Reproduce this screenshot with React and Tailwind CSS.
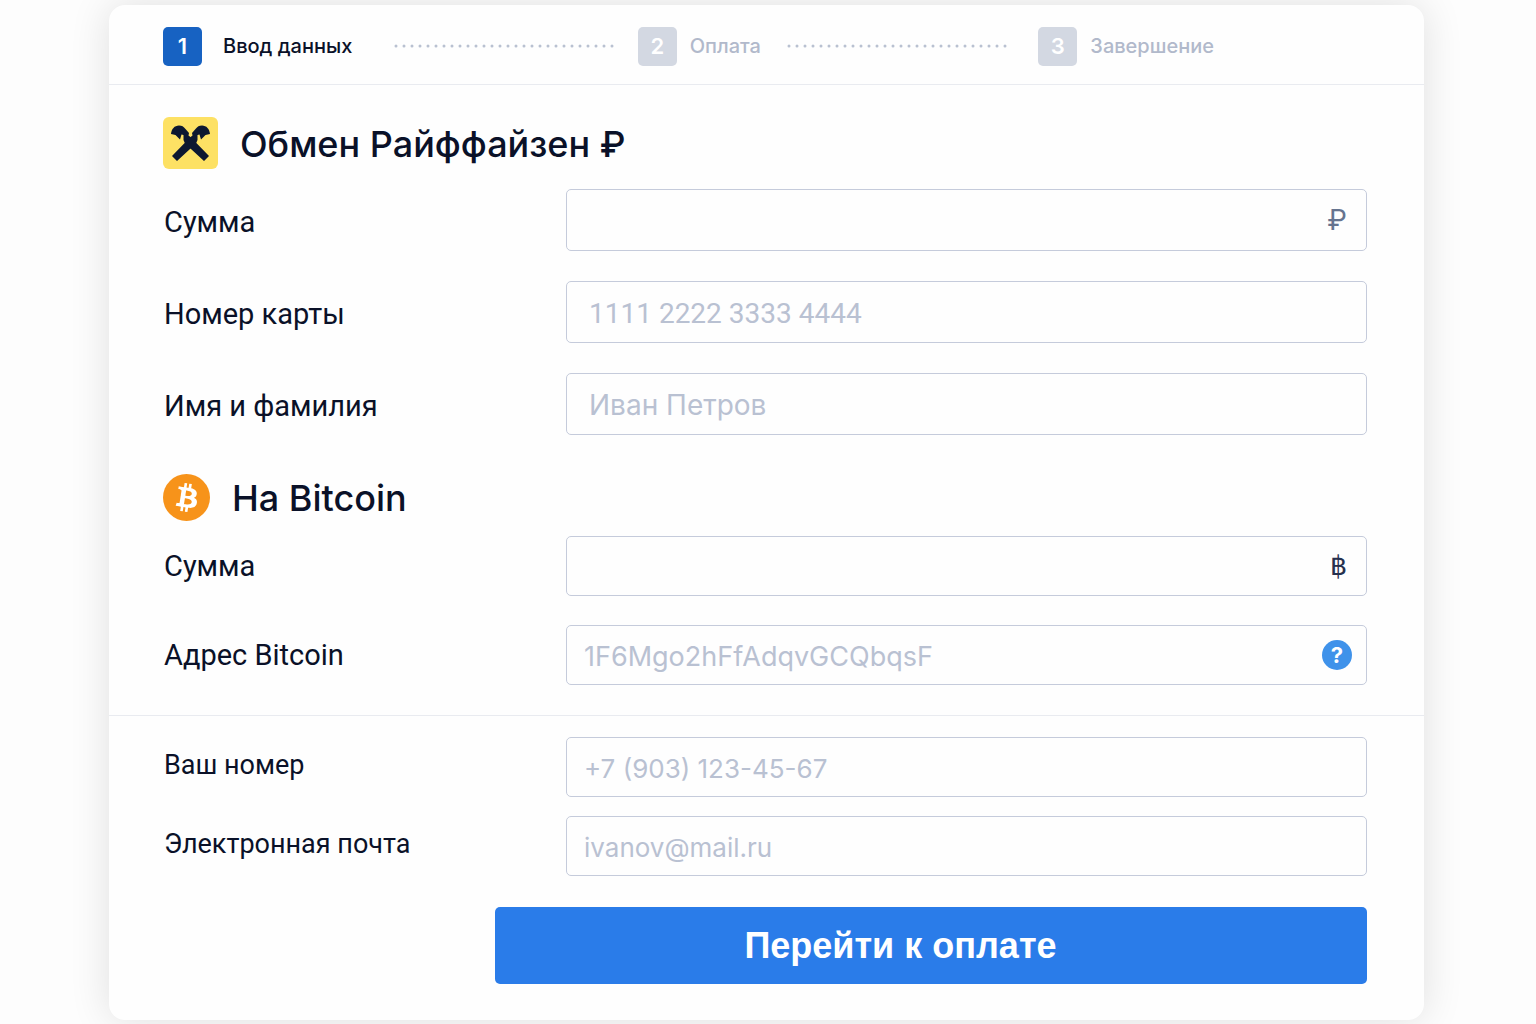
import React from 'react';

function Step({ number, title, active }) {
  return (
    <li aria-current={active ? 'step' : undefined} className={active ? 'flex items-center gap-[21px]' : 'flex items-center gap-[13px]'}>
      <span className={`flex size-[39px] items-center justify-center rounded-[5px] text-[22px] font-semibold text-white ${active ? 'bg-[#1762c2]' : 'bg-[#d3d8e2]'}`}>
        {number}
      </span>
      <span className={`text-xl font-medium ${active ? 'text-[#0a1128]' : 'text-[#b1b9cb]'}`}>{title}</span>
    </li>
  );
}

function Dots({ className }) {
  return (
    <li aria-hidden="true" className={`min-w-0 flex-1 ${className}`}>
      <svg className="block h-1 w-full" fill="none">
        <line x1="2" y1="2" x2="100%" y2="2" stroke="#b9c1d1" strokeWidth="3" strokeLinecap="round" strokeDasharray="0 8" />
      </svg>
    </li>
  );
}

const sizes = {
  lg: { label: 'pt-1 text-[29px]', input: 'h-[62px] px-[22px] text-[28px]' },
  md: { label: 'text-[29px]', input: 'h-[60px] px-[17px] text-[27px]' },
  sm: { label: 'pb-1 text-[27px]', input: 'h-[60px] px-[17px] text-[26px]' },
};

function Field({ id, label, placeholder, type = 'text', size = 'lg', font = '', suffix }) {
  return (
    <div className="flex items-center">
      <label htmlFor={id} className={`w-[403px] shrink-0 pl-px font-[Roboto,sans-serif] leading-8 text-[#0a1128] ${sizes[size].label}`}>
        {label}
      </label>
      <div className="relative min-w-0 flex-1">
        <input
          id={id}
          type={type}
          placeholder={placeholder}
          className={`block w-full rounded-[5px] border border-[#c5cbdb] bg-[#fefefe] pt-0.5 text-[#0a1128] outline-none placeholder:text-[#b9c1d2] placeholder:opacity-100 ${sizes[size].input} ${font}`}
        />
        {suffix}
      </div>
    </div>
  );
}

function RaiffeisenLogo() {
  return (
    <svg width="55" height="52" viewBox="0 0 55 52" aria-hidden="true">
      <rect width="55" height="52" rx="6" fill="#fde164" />
      <g fill="#0c1730">
        <path d="M8 17C8.500 12 11.500 8.500 16 8.500C19 8.500 20.500 9.500 22.500 12L26 16L25.500 18.500L28 20.500L46 39L41 44L22 26.500L20.500 23L20.500 18L18.500 17.500L17 22.500L12.500 18Z" />
        <path d="M47 17C46.500 12 43.500 8.500 39 8.500C36 8.500 34.500 9.500 32.500 12L29 16L29.500 18.500L27 20.500L9 39L14 44L33 26.500L34.500 23L34.500 18L36.500 17.500L38 22.500L42.500 18Z" />
      </g>
    </svg>
  );
}

function BitcoinLogo() {
  return (
    <svg width="47" height="47" viewBox="0 0 32 32" aria-hidden="true">
      <circle cx="16" cy="16" r="16" fill="#f7931a" />
      <path transform="rotate(-5 16 16)" fill="#fff" d="M23.189 14.02c.314-2.096-1.283-3.223-3.465-3.975l.708-2.84-1.728-.43-.69 2.765c-.454-.114-.92-.22-1.385-.326l.695-2.783L15.596 6l-.708 2.839c-.376-.086-.746-.17-1.104-.26l.002-.009-2.384-.595-.46 1.846s1.283.294 1.256.312c.7.175.826.638.805 1.006l-.806 3.235c.048.012.11.03.18.057l-.183-.045-1.13 4.532c-.086.212-.303.531-.793.41.018.025-1.256-.313-1.256-.313l-.858 1.978 2.25.561c.418.105.828.215 1.231.318l-.715 2.872 1.727.43.708-2.84c.472.127.93.245 1.378.357l-.706 2.828 1.728.43.715-2.866c2.948.558 5.164.333 6.097-2.333.752-2.146-.037-3.385-1.588-4.192 1.13-.26 1.98-1.003 2.207-2.538zm-3.95 5.538c-.533 2.147-4.148.986-5.32.695l.95-3.805c1.172.293 4.929.872 4.37 3.11zm.535-5.569c-.487 1.953-3.495.96-4.47.717l.86-3.45c.975.243 4.118.696 3.61 2.733z" />
    </svg>
  );
}

export default function App() {
  return (
    <div className="bg-[#fdfdfd] pt-[5px] pr-28 pb-1 pl-[109px] font-[Inter,Roboto,sans-serif]">
      <main className="rounded-2xl bg-[#fefefe] pb-9 shadow-[0_0_40px_rgba(0,0,0,0.12)]">
        <ol className="flex h-20 items-center border-b border-[#e9ebf0] pt-[3px] pr-[210px] pl-[54px]">
          <Step number="1" title="Ввод данных" active />
          <Dots className="mr-[22px] ml-[42px]" />
          <Step number="2" title="Оплата" />
          <Dots className="mr-[30px] ml-[26px]" />
          <Step number="3" title="Завершение" />
        </ol>
        <form onSubmit={(e) => e.preventDefault()}>
          <section className="pt-8 pr-[57px] pl-[54px]">
            <h2 className="flex h-[52px] items-center gap-[22px] text-[36px] leading-[48px] font-medium text-[#0a1128]">
              <RaiffeisenLogo />
              <span className="pt-0.5">Обмен Райффайзен ₽</span>
            </h2>
            <div className="mt-5 flex flex-col gap-[30px]">
              <Field
                id="rub"
                label="Сумма"
                suffix={<span className="pointer-events-none absolute inset-y-0 right-5 flex items-center text-[28px] text-[#66748f]">₽</span>}
              />
              <Field id="card" label="Номер карты" placeholder="1111 2222 3333 4444" font="font-[Roboto,sans-serif]" />
              <Field id="name" label="Имя и фамилия" placeholder="Иван Петров" />
            </div>
          </section>
          <section className="border-b border-[#e9ebf0] pt-[38px] pr-[57px] pb-[30px] pl-[54px]">
            <h2 className="flex h-12 items-center gap-[22px] text-[36px] leading-[44px] font-medium text-[#0a1128]">
              <BitcoinLogo />
              <span className="pt-0.5">На Bitcoin</span>
            </h2>
            <div className="mt-[15px] flex flex-col gap-[29px]">
              <Field
                id="btc"
                size="md"
                label="Сумма"
                suffix={<span className="pointer-events-none absolute inset-y-0 right-5 flex items-center font-['Liberation_Sans',sans-serif] text-[27px] text-[#26304d]">฿</span>}
              />
              <Field
                id="address"
                size="md"
                label="Адрес Bitcoin"
                placeholder="1F6Mgo2hFfAdqvGCQbqsF"
                suffix={
                  <button type="button" aria-label="Справка" className="absolute inset-y-0 right-[15px] my-auto flex size-[30px] items-center justify-center rounded-full bg-[#3f92ea] text-[22px] font-bold text-white">
                    ?
                  </button>
                }
              />
            </div>
          </section>
          <section className="flex flex-col gap-[19px] pt-[21px] pr-[57px] pl-[54px]">
            <Field id="phone" type="tel" size="sm" label="Ваш номер" placeholder="+7 (903) 123-45-67" />
            <Field id="email" type="email" size="sm" label="Электронная почта" placeholder="ivanov@mail.ru" />
          </section>
          <div className="mt-[31px] pr-[57px] pl-[386px]">
            <button type="submit" className="h-[77px] w-full rounded-[5px] bg-[#2a7ce9] pr-[61px] font-['Liberation_Sans',sans-serif] text-4xl font-bold text-white">
              Перейти к оплате
            </button>
          </div>
        </form>
      </main>
    </div>
  );
}
